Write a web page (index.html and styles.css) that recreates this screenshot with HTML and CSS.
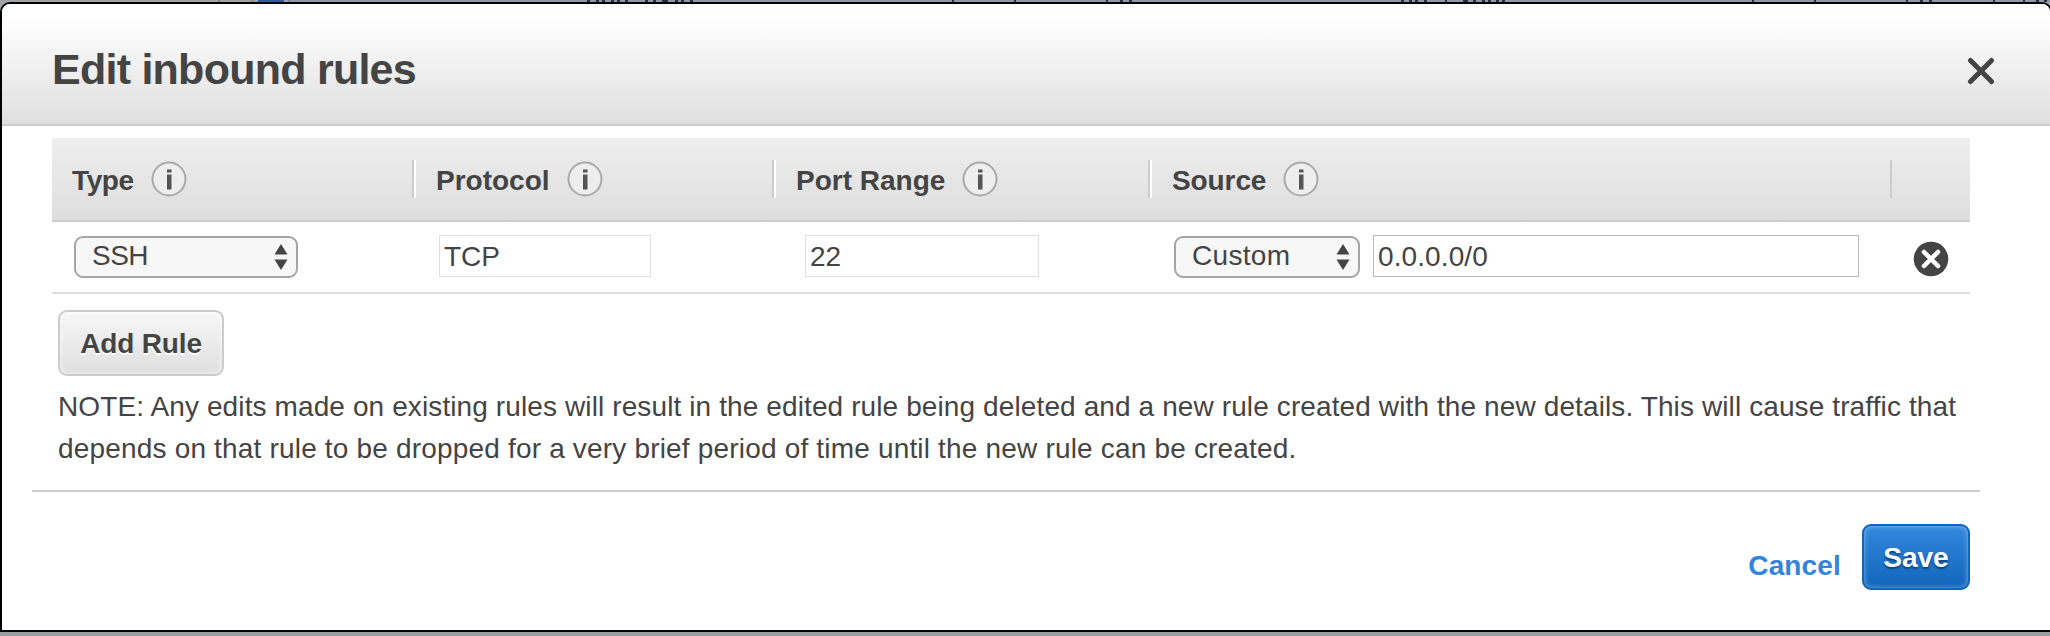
FILE: index.html
```html
<!DOCTYPE html>
<html lang="en">
<head>
<meta charset="utf-8">
<title>Edit inbound rules</title>
<link rel="stylesheet" href="styles.css">
</head>
<body>
<svg class="backdrop" width="2050" height="2" aria-hidden="true"><rect x="288" width="1762" height="2" fill="#8f99a9"/><rect x="258" width="26" height="2" fill="#2f5d99"/><path d="M219 0v2M252.500 0v2M289 0v2" stroke="#81848a" stroke-width="2"/>
<path stroke="#28303c" stroke-width="2" d="M587 1h3M596 1h3M602 1h3M611 1h3M617 1h3M625 1h3M645 1h3M653 1h3M662 1h6M675 1h3M681 1h3M690 1h3M952 1h2M1014 1h2M1106 1h2M1120 1h3M1129 1h3M1401 1h3M1409 1h3M1415 1h3M1424 1h3M1445 1h2M1463 1h5M1473 1h3M1482 1h3M1488 1h3M1496 1h3M1502 1h3M1752 1h2M1814 1h2M1906 1h2M1920 1h3M1929 1h3M1993 1h2M2023 1h2M2036 1h3M2044 1h3"/></svg>
<section class="modal" role="dialog" aria-labelledby="title">
  <header class="modal-header">
    <h1 class="title" id="title">Edit inbound rules</h1>
    <svg class="close" width="28" height="28" viewBox="0 0 28 28"><path d="M3.500 3.500L24.500 24.500M24.500 3.500L3.500 24.500"/></svg>
  </header>
  <div class="table">
    <div class="row head">
      <div class="th"><span class="t-type">Type</span><svg class="info" viewBox="0 0 36 36"><circle cx="18" cy="18" r="16.500"/><path d="M16 8.500h4.500v3h-4.500zM16 13.500h4.500v15h-4.500z"/></svg></div>
      <div class="th"><span class="t-protocol">Protocol</span><svg class="info" viewBox="0 0 36 36"><circle cx="18" cy="18" r="16.500"/><path d="M16 8.500h4.500v3h-4.500zM16 13.500h4.500v15h-4.500z"/></svg></div>
      <div class="th"><span class="t-port">Port Range</span><svg class="info" viewBox="0 0 36 36"><circle cx="18" cy="18" r="16.500"/><path d="M16 8.500h4.500v3h-4.500zM16 13.500h4.500v15h-4.500z"/></svg></div>
      <div class="th"><span class="t-source">Source</span><svg class="info" viewBox="0 0 36 36"><circle cx="18" cy="18" r="16.500"/><path d="M16 8.500h4.500v3h-4.500zM16 13.500h4.500v15h-4.500z"/></svg></div>
      <div class="th last"></div>
    </div>
    <div class="row body">
      <div class="td type"><div class="select"><span class="v-ssh">SSH</span><svg class="arrows" viewBox="0 0 14 26"><path d="M7 0L13.500 10.500H.5zM7 26L13.500 15.500H.5z"/></svg></div></div>
      <div class="td protocol"><div class="field">TCP</div></div>
      <div class="td port"><div class="field">22</div></div>
      <div class="td source"><div class="select"><span class="v-custom">Custom</span><svg class="arrows" viewBox="0 0 14 26"><path d="M7 0L13.500 10.500H.5zM7 26L13.500 15.500H.5z"/></svg></div><div class="field address">0.0.0.0/0</div></div>
      <div class="td remove"><svg width="36" height="36" viewBox="0 0 36 36"><circle cx="18" cy="18" r="17.300" fill="#444"/><path d="M11 11l14 14M25 11L11 25" stroke="#fff" stroke-width="4.500" stroke-linecap="round"/></svg></div>
    </div>
  </div>
  <button class="btn add"><span>Add Rule</span></button>
  <p class="note"><span class="n1">NOTE: Any edits made on existing rules will result in the edited rule being deleted and a new rule created with the new details. This will cause traffic that</span><br><span class="n2">depends on that rule to be dropped for a very brief period of time until the new rule can be created.</span></p>
  <footer class="footer"><a class="cancel">Cancel</a><button class="btn save"><span>Save</span></button></footer>
</section>
</body>
</html>
```
FILE: styles.css
```css
* { box-sizing: border-box; }
body {
  margin: 0;
  height: 636px;
  overflow: hidden;
  background: linear-gradient(#a1a3a7 0 300px, #9b9ca4 300px);
  font: 28px/42px "Liberation Sans", Arial, sans-serif;
  color: #444;
}
.backdrop { display: block; }
.modal {
  width: 2052px;
  height: 630px;
  border: 2px solid #000;
  border-radius: 10px 10px 0 0;
  background: #fff;
  overflow: hidden;
}
.modal-header {
  display: flex;
  justify-content: space-between;
  height: 122px;
  padding: 40px 55px 0 50px;
  border-bottom: 2px solid #ccc;
  background: linear-gradient(#fff 10%, #dfdfdf);
}
.title {
  margin: 0;
  font-size: 43px;
  line-height: 51px;
  letter-spacing: -.75px;
  white-space: nowrap;
}
.close { margin-top: 13px; fill: none; stroke: #444; stroke-width: 5; stroke-linecap: round; }
.table { width: 1918px; margin: 12px 0 0 50px; }
.row { display: grid; grid-template-columns: 360px 360px 376px 742px 80px; }
.row.head { grid-template-columns: 362px 360px 376px 742px 78px; }
.head {
  height: 84px;
  padding-top: 22px;
  border-bottom: 2px solid #ccc;
  background: linear-gradient(#eee, #dedede);
}
.th {
  display: flex;
  height: 38px;
  padding-left: 20px;
  border-left: 2px solid #fff;
  border-right: 2px solid #ccc;
  font-weight: bold;
  line-height: 41px;
  white-space: nowrap;
}
.th:first-child { padding-left: 18px; border-left-color: transparent; }
.th.last { border-color: transparent; }
.t-type { letter-spacing: -.4px; }
.t-source { letter-spacing: -.1px; }
.info { width: 36px; height: 36px; margin: 1px 0 0 17px; fill: #555; }
.info circle { fill: #eee; stroke: #aaa; stroke-width: 2; }
.body { height: 72px; border-bottom: 2px solid #ddd; padding-top: 13px; }
.td { display: flex; align-items: flex-start; }
.type { padding: 1px 0 0 22px; }
.type .select { width: 224px; }
.protocol { padding-left: 27px; }
.protocol .field { width: 212px; }
.port { padding-left: 33px; }
.port .field { width: 234px; }
.source { padding-left: 26px; }
.source .select { width: 186px; margin: 1px 13px 0 0; }
.source .address { width: 486px; border-color: #bbb; letter-spacing: .1px; }
.remove { padding: 6px 0 0 23px; }
.select {
  display: flex;
  align-items: center;
  justify-content: space-between;
  height: 42px;
  padding: 0 8px 2px 16px;
  border: 2px solid #a5a5a5;
  border-radius: 9px;
  background: #f7f7f7;
}
.v-ssh { letter-spacing: -.5px; }
.v-custom { letter-spacing: .3px; }
.arrows { width: 14px; height: 26px; margin-top: 2px; fill: #444; }
.field { height: 42px; padding-left: 4px; border: 1px solid #ddd; line-height: 41px; }
.btn {
  display: flex;
  align-items: center;
  justify-content: center;
  height: 66px;
  padding: 2px 0 0;
  border-radius: 9px;
  font: bold 28px/42px "Liberation Sans", Arial, sans-serif;
}
.add {
  width: 166px;
  margin: 16px 0 0 56px;
  border: 2px solid #ccc;
  background: linear-gradient(#f7f7f7, #dfdfdf);
  box-shadow: inset 0 0 5px rgba(255, 255, 255, .8);
  color: #444;
  letter-spacing: -.15px;
  text-shadow: 0 2px 0 #fff;
}
.note { margin: 10px 0 0 56px; white-space: nowrap; }
.n1 { letter-spacing: .111px; }
.n2 { letter-spacing: .18px; }
.footer {
  display: flex;
  justify-content: flex-end;
  width: 1948px;
  margin: 20px 0 0 30px;
  padding: 32px 10px 0 0;
  border-top: 2px solid #ccc;
}
.cancel { margin: 21px 21px 0 0; font-weight: bold; letter-spacing: .15px; color: #3184dd; }
.save {
  width: 108px;
  border: 2px solid #1166bb;
  background: linear-gradient(#3388dd, #1166bb);
  box-shadow: inset 0 0 5px rgba(255, 255, 255, .45);
  color: #fff;
  text-shadow: 0 2px 2px #084482;
}
```
